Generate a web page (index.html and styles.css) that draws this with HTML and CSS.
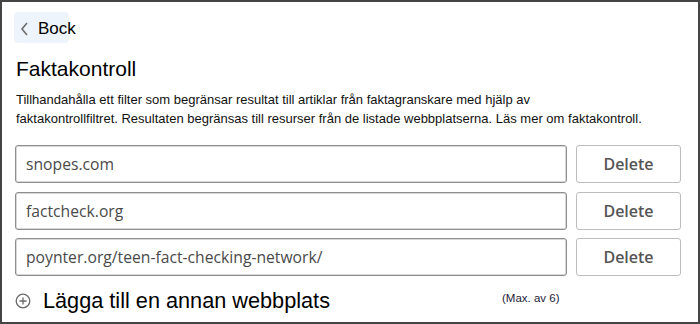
FILE: index.html
```html
<!DOCTYPE html>
<html lang="sv">
<head>
    <meta charset="UTF-8">
    <title>Faktakontroll</title>
    <link rel="stylesheet" href="styles.css">
</head>
<body>
    <div class="frame">
        <button class="back-btn" type="button">
            <svg class="chevron" width="9" height="14" viewBox="0 0 9 14">
                <path d="M7 1 L2 7 L7 13" fill="none" stroke="#6b6b6b" stroke-width="1.6"/>
            </svg>
            <span>Bock</span>
        </button>

        <h2 class="title">Faktakontroll</h2>
        <p class="intro">Tillhandahålla ett filter som begränsar resultat till artiklar från faktagranskare med hjälp av<br>faktakontrollfiltret. Resultaten begränsas till resurser från de listade webbplatserna. Läs mer om faktakontroll.</p>

        <div class="site-list">
            <div class="site-row">
                <input class="site-input" type="text" value="snopes.com">
                <button class="delete-btn" type="button">Delete</button>
            </div>
            <div class="site-row">
                <input class="site-input" type="text" value="factcheck.org">
                <button class="delete-btn" type="button">Delete</button>
            </div>
            <div class="site-row">
                <input class="site-input" type="text" value="poynter.org/teen-fact-checking-network/">
                <button class="delete-btn" type="button">Delete</button>
            </div>
        </div>

        <div class="add-row">
            <svg class="plus" width="16" height="16" viewBox="0 0 16 16">
                <circle cx="8" cy="8" r="6.8" fill="none" stroke="#6a6a6a" stroke-width="1.3"/>
                <path d="M8 4.4 V11.6 M4.4 8 H11.6" stroke="#6a6a6a" stroke-width="1.3"/>
            </svg>
            <span class="add-label">Lägga till en annan webbplats</span>
            <span class="max-note">(Max. av 6)</span>
        </div>
    </div>
</body>
</html>
```

FILE: styles.css
```css
* {
    margin: 0;
    padding: 0;
    box-sizing: border-box;
}

body {
    background-color: white;
    font-family: "Liberation Sans", Arial, sans-serif;
    color: #000;
}

.frame {
    width: 700px;
    height: 324px;
    border: 2px solid #444;
    padding: 10px 14px 0 14px;
}

.back-btn {
    display: flex;
    align-items: center;
    gap: 9px;
    height: 31px;
    width: 55px;
    margin-left: -2px;
    padding-left: 6px;
    padding-top: 2px;
    background-color: #eef4fb;
    border: none;
    border-radius: 4px;
    font-family: "Liberation Sans", Arial, sans-serif;
    font-size: 17px;
    color: #000;
    overflow: visible;
    white-space: nowrap;
}

.chevron {
    flex-shrink: 0;
}

.title {
    margin-top: 14px;
    font-size: 21px;
    font-weight: normal;
    line-height: 24px;
}

.intro {
    margin-top: 9px;
    font-size: 13px;
    line-height: 19px;
    color: #111;
}

.site-list {
    display: flex;
    flex-direction: column;
    gap: 8.5px;
    margin-top: 17px;
    margin-left: -1px;
}

.site-row {
    display: flex;
    gap: 9px;
}

.site-input {
    width: 552px;
    height: 38px;
    padding: 0 10px;
    border: 1px solid #8e8e8e;
    border-radius: 3px;
    box-shadow: inset 0 0 0 1px #d8d8d8;
    font-family: "Open Sans", "Noto Sans", sans-serif;
    font-size: 15.7px;
    color: #4a4a4a;
    outline: none;
}

.delete-btn {
    width: 105px;
    height: 38px;
    background-color: white;
    border: 1px solid #bdbdbd;
    border-radius: 3px;
    font-family: "Open Sans", "Noto Sans", sans-serif;
    font-size: 16px;
    font-weight: 600;
    color: #555;
    cursor: pointer;
}

.add-row {
    display: flex;
    align-items: center;
    margin-top: 11px;
    height: 28px;
}

.plus {
    flex-shrink: 0;
    margin-left: -1px;
    margin-right: 12px;
}

.add-label {
    font-size: 21.7px;
}

.max-note {
    margin-left: 172px;
    margin-top: -6px;
    font-size: 11.5px;
    color: #1c1c3a;
}
```
